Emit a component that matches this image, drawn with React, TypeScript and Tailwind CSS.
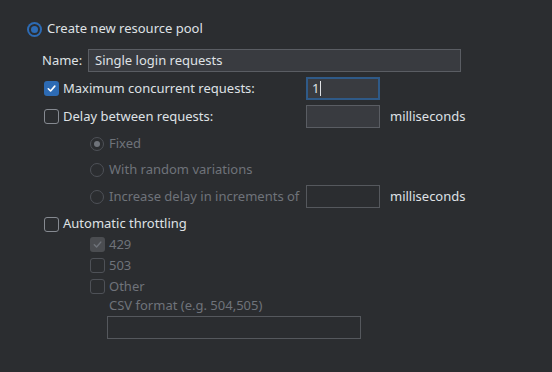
import React from 'react';

const font = { fontFamily: '"Noto Sans", Inter, sans-serif' };

const Radio = ({ checked, disabled }: { checked?: boolean; disabled?: boolean }) => {
    if (disabled) {
        return (
            <span className="w-[14px] h-[14px] rounded-full border border-[#4e5157] flex items-center justify-center shrink-0">
                {checked && <span className="w-[6px] h-[6px] rounded-full bg-[#6f737a]" />}
            </span>
        );
    }
    return (
        <span className="w-[15px] h-[15px] rounded-full bg-[#2d6bb4] flex items-center justify-center shrink-0">
            <span className="w-[11px] h-[11px] rounded-full bg-[#2b2d30] flex items-center justify-center">
                {checked && <span className="w-[7px] h-[7px] rounded-full bg-[#2d6bb4]" />}
            </span>
        </span>
    );
};

const Check = ({ checked, disabled }: { checked?: boolean; disabled?: boolean }) => {
    if (checked && !disabled) {
        return (
            <span className="w-[15px] h-[15px] rounded-[3px] bg-[#2d6bb4] flex items-center justify-center shrink-0">
                <svg width="11" height="11" viewBox="0 0 12 12" fill="none">
                    <path d="M2.5 6.3 L5 8.7 L9.6 3.4" stroke="#ffffff" strokeWidth="1.8" strokeLinecap="round" strokeLinejoin="round" />
                </svg>
            </span>
        );
    }
    if (checked && disabled) {
        return (
            <span className="w-[15px] h-[15px] rounded-[3px] bg-[#4b4d51] flex items-center justify-center shrink-0">
                <svg width="11" height="11" viewBox="0 0 12 12" fill="none">
                    <path d="M2.5 6.3 L5 8.7 L9.6 3.4" stroke="#6f737a" strokeWidth="1.6" strokeLinecap="round" strokeLinejoin="round" />
                </svg>
            </span>
        );
    }
    return (
        <span className={`w-[15px] h-[15px] rounded-[3px] border shrink-0 ${disabled ? 'border-[#4e5157]' : 'border-[#868a91]'}`} />
    );
};

export default function App() {
    return (
        <div className="w-[552px] h-[372px] bg-[#2b2d30] text-[13px] text-[#dfe1e5] pt-[19px] overflow-hidden" style={font}>
            {/* Create new resource pool */}
            <div className="h-[20px] pl-[27px] flex items-center gap-[5px]">
                <Radio checked />
                <span>Create new resource pool</span>
            </div>

            {/* Name */}
            <div className="h-[23px] mt-[10px] pl-[42px] flex items-center">
                <span className="w-[46px]">Name:</span>
                <div className="w-[373px] h-[23px] border border-[#5a5d63] bg-[#393b40] flex items-center px-[6px]">
                    Single login requests
                </div>
            </div>

            {/* Maximum concurrent requests */}
            <div className="h-[23px] mt-[5px] pl-[44px] flex items-center">
                <div className="w-[262px] flex items-center gap-[4px]">
                    <Check checked />
                    <span>Maximum concurrent requests:</span>
                </div>
                <div className="w-[74px] h-[23px] border-2 border-[#2f5a88] bg-[#393b40] flex items-center px-[4px]">
                    <span>1</span>
                    <span className="w-px h-[15px] bg-[#dfe1e5] ml-px" />
                </div>
            </div>

            {/* Delay between requests */}
            <div className="h-[23px] mt-[5px] pl-[44px] flex items-center">
                <div className="w-[262px] flex items-center gap-[4px]">
                    <Check />
                    <span>Delay between requests:</span>
                </div>
                <div className="w-[74px] h-[23px] border border-[#5a5d63] bg-[#393b40]" />
                <span className="ml-[10px]">milliseconds</span>
            </div>

            {/* Delay options */}
            <div className="text-[#6f737a]">
                <div className="h-[20px] mt-[6px] pl-[90px] flex items-center gap-[5px]">
                    <Radio checked disabled />
                    <span>Fixed</span>
                </div>
                <div className="h-[20px] mt-[6px] pl-[90px] flex items-center gap-[5px]">
                    <Radio disabled />
                    <span>With random variations</span>
                </div>
                <div className="h-[23px] mt-[5px] pl-[90px] flex items-center">
                    <div className="w-[216px] flex items-center gap-[5px]">
                        <Radio disabled />
                        <span>Increase delay in increments of</span>
                    </div>
                    <div className="w-[74px] h-[23px] border border-[#55585d]" />
                    <span className="ml-[10px] text-[#dfe1e5]">milliseconds</span>
                </div>
            </div>

            {/* Automatic throttling */}
            <div className="h-[20px] mt-[6px] pl-[44px] flex items-center gap-[4px]">
                <Check />
                <span>Automatic throttling</span>
            </div>

            <div className="pl-[90px] text-[#6f737a]">
                <div className="h-[21px] flex items-center gap-[4px]">
                    <Check checked disabled />
                    <span>429</span>
                </div>
                <div className="h-[21px] flex items-center gap-[4px]">
                    <Check disabled />
                    <span>503</span>
                </div>
                <div className="h-[21px] flex items-center gap-[4px]">
                    <Check disabled />
                    <span>Other</span>
                </div>
                <div className="h-[18px] pl-[19px] flex items-center">CSV format (e.g. 504,505)</div>
                <div className="ml-[17px] mt-[1px] w-[254px] h-[23px] border border-[#55585d]" />
            </div>
        </div>
    );
}
